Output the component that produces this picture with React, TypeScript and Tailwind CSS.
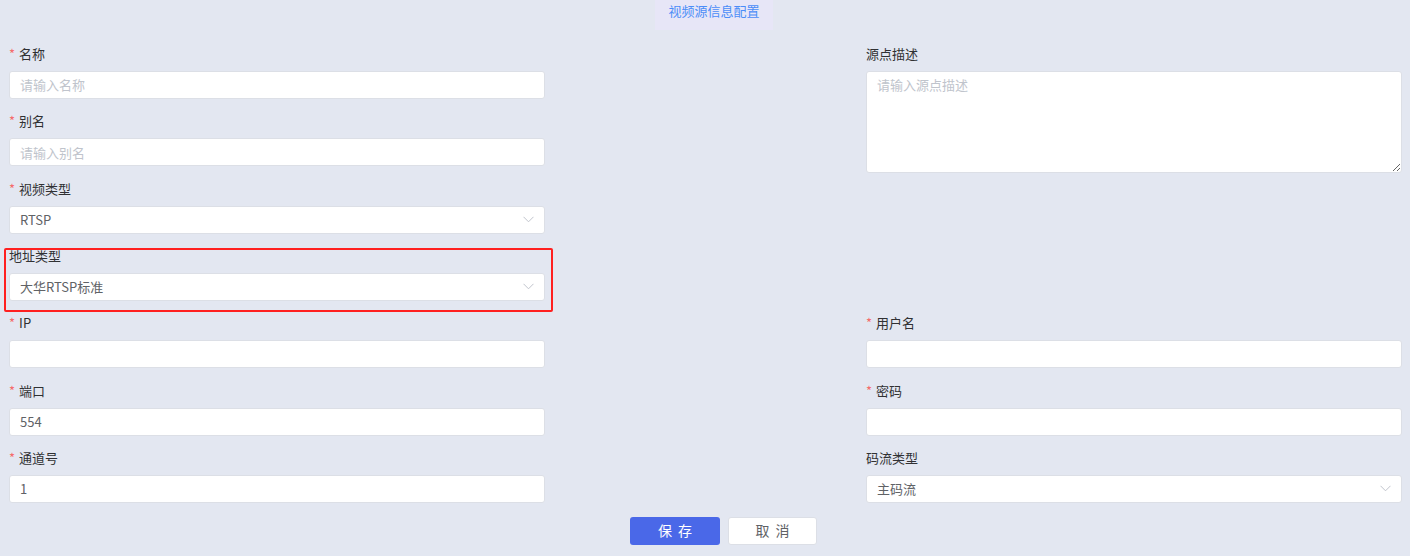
import React from "react";

const font = "font-['Microsoft_YaHei','Noto_Sans_CJK_SC',sans-serif]";

function Label({ text, required }: { text: string; required?: boolean }) {
    return (
        <div className="h-[20px] flex items-center text-[13px] text-[#303133] leading-[20px]">
            {required && <span className="text-[#f56c6c] mr-[4px] text-[13px]">*</span>}
            <span>{text}</span>
        </div>
    );
}

function Input({ value, placeholder }: { value?: string; placeholder?: string }) {
    return (
        <div className="mt-[7px] h-[28px] bg-white border border-[#dcdfe6] rounded-[3px] px-[10px] flex items-center text-[13px]">
            {value ? <span className="text-[#606266]">{value}</span> : <span className="text-[#c0c4cc]">{placeholder}</span>}
        </div>
    );
}

function Select({ value }: { value: string }) {
    return (
        <div className="mt-[7px] h-[28px] bg-white border border-[#dcdfe6] rounded-[3px] pl-[10px] pr-[10px] flex items-center justify-between text-[13px]">
            <span className="text-[#606266]">{value}</span>
            <svg width="11" height="7" viewBox="0 0 11 7" fill="none">
                <path d="M0.5 0.8 L5.5 5.8 L10.5 0.8" stroke="#c0c4cc" strokeWidth="1" />
            </svg>
        </div>
    );
}

export default function App() {
    return (
        <div className={`w-[1410px] h-[556px] bg-[#e3e7f1] ${font} relative overflow-hidden`}>
            <div className="flex justify-center">
                <div className="ml-[18px] w-[118px] h-[30px] bg-[#e7e6f7] flex justify-center pt-[1px]">
                    <span className="text-[13px] text-[#4b8df8] leading-[20px]">视频源信息配置</span>
                </div>
            </div>

            <div className="mt-[14px] pl-[9px] pr-[8px] grid grid-cols-[536px_536px] justify-between grid-rows-[repeat(7,55px)] gap-y-[12.33px]">
                <div className="col-start-1 row-start-1">
                    <Label text="名称" required />
                    <Input placeholder="请输入名称" />
                </div>
                <div className="col-start-2 row-start-1">
                    <Label text="源点描述" />
                    <textarea
                        placeholder="请输入源点描述"
                        className="mt-[7px] block w-full h-[102px] bg-white border border-[#dcdfe6] rounded-[3px] px-[10px] py-[3px] text-[13px] leading-[20px] placeholder:text-[#c0c4cc] outline-none"
                    />
                </div>
                <div className="col-start-1 row-start-2">
                    <Label text="别名" required />
                    <Input placeholder="请输入别名" />
                </div>
                <div className="col-start-1 row-start-3">
                    <Label text="视频类型" required />
                    <Select value="RTSP" />
                </div>
                <div className="col-start-1 row-start-4 relative">
                    <div className="absolute left-[-5px] top-[2px] w-[549px] h-[64px] border-2 border-[#ff2020] rounded-[2px]" />
                    <Label text="地址类型" />
                    <Select value="大华RTSP标准" />
                </div>
                <div className="col-start-1 row-start-5">
                    <Label text="IP" required />
                    <Input />
                </div>
                <div className="col-start-2 row-start-5">
                    <Label text="用户名" required />
                    <Input />
                </div>
                <div className="col-start-1 row-start-6">
                    <Label text="端口" required />
                    <Input value="554" />
                </div>
                <div className="col-start-2 row-start-6">
                    <Label text="密码" required />
                    <Input />
                </div>
                <div className="col-start-1 row-start-7">
                    <Label text="通道号" required />
                    <Input value="1" />
                </div>
                <div className="col-start-2 row-start-7">
                    <Label text="码流类型" />
                    <Select value="主码流" />
                </div>
            </div>

            <div className="mt-[14px] pl-[630px] flex gap-[8px]">
                <button className="w-[90px] h-[28px] rounded-[3px] bg-[#4a68e8] text-white text-[14px] tracking-[6px] pl-[6px]">
                    保存
                </button>
                <button className="w-[89px] h-[28px] rounded-[3px] bg-white border border-[#dcdfe6] text-[#606266] text-[14px] tracking-[6px] pl-[6px]">
                    取消
                </button>
            </div>
        </div>
    );
}
